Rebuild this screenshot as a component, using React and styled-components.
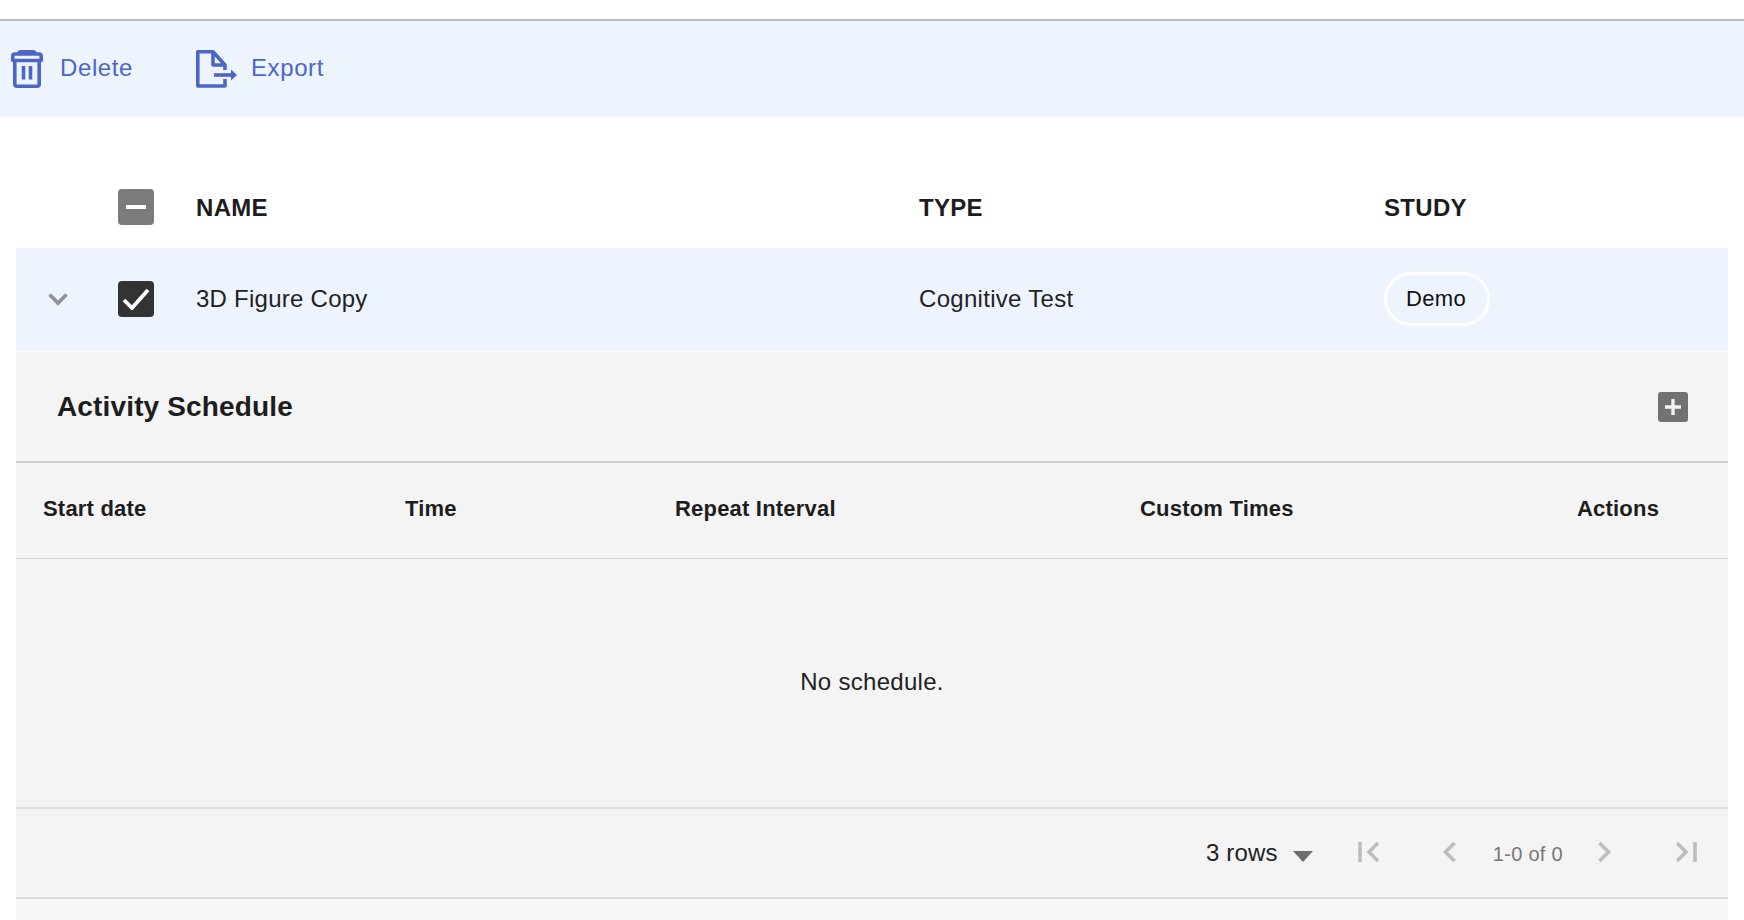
import React from "react";
import styled, { createGlobalStyle } from "styled-components";

const GlobalStyle = createGlobalStyle`
  html, body {
    margin: 0;
    padding: 0;
    background: #fff;
    font-family: "Liberation Sans", Arial, sans-serif;
    color: #1f1f1f;
  }
`;

const Page = styled.div`
  width: 1744px;
  height: 920px;
  overflow: hidden;
  padding-top: 19px;
  box-sizing: border-box;
`;

const Toolbar = styled.div`
  display: flex;
  align-items: center;
  height: 98px;
  box-sizing: border-box;
  border-top: 2px solid #bcbec2;
  background: #edf4fe;
  padding-left: 11px;
`;

const ToolButton = styled.div`
  display: flex;
  align-items: center;
  gap: ${(p) => p.$inner}px;
  margin-right: ${(p) => p.$gap || 0}px;
  color: #4c66c8;
  font-size: 24px;
  letter-spacing: 0.6px;
  line-height: 1;
  padding-bottom: 2px;
`;

const ToolIcon = styled.svg`
  display: block;
  margin-top: 2px;
`;

const Table = styled.div`
  margin: 0 16px;
`;

const MainRow = styled.div`
  display: grid;
  grid-template-columns: 102px 78px 723px 465px 1fr;
  align-items: center;
  box-sizing: border-box;
  height: ${(p) => p.$height}px;
  padding-bottom: 1px;
  background: ${(p) => p.$bg || "transparent"};
`;

const HeadRow = styled(MainRow)`
  padding-top: 49px;
  padding-bottom: 0;
  height: 131px;
`;

const HeadCell = styled.div`
  font-size: 24px;
  font-weight: 700;
  letter-spacing: 0.3px;
  color: #1d1d1d;
  padding-top: 2px;
`;

const BodyCell = styled.div`
  font-size: 24px;
  letter-spacing: ${(p) => p.$spacing}px;
  color: #222;
  padding-bottom: 1px;
`;

const Check = styled.div`
  width: 36px;
  height: 36px;
  border-radius: 4px;
  background: ${(p) => p.$bg};
  display: flex;
  align-items: center;
  justify-content: center;
`;

const ChevronCell = styled.div`
  display: flex;
  justify-content: center;
  padding-right: 18px;
`;

const Chip = styled.div`
  display: inline-flex;
  align-items: center;
  justify-content: center;
  width: 106px;
  height: 54px;
  box-sizing: border-box;
  border: 3px solid #fff;
  border-radius: 27px;
  padding-right: 2px;
  font-size: 22px;
  letter-spacing: 0.3px;
  color: #111;
`;

const Panel = styled.div`
  margin-top: 1px;
  background: #f4f4f4;
`;

const PanelHead = styled.div`
  display: flex;
  align-items: center;
  justify-content: space-between;
  height: 109px;
  padding: 0 40px 0 41px;
  border-bottom: 2px solid #cfcfcf;
`;

const PanelTitle = styled.div`
  font-size: 28px;
  font-weight: 700;
  letter-spacing: 0.15px;
  color: #1d1d1d;
`;

const AddButton = styled.div`
  width: 30px;
  height: 30px;
  border-radius: 3px;
  background: #727272;
  display: flex;
  align-items: center;
  justify-content: center;
`;

const ScheduleHead = styled.div`
  display: grid;
  grid-template-columns: 362px 270px 465px 437px 1fr;
  align-items: center;
  height: 95px;
  padding-left: 27px;
  border-bottom: 1px solid #d8d8d8;
`;

const ScheduleCell = styled.div`
  font-size: 22px;
  font-weight: 700;
  letter-spacing: 0.2px;
  color: #1d1d1d;
  padding-bottom: 4px;
`;

const Empty = styled.div`
  display: flex;
  align-items: center;
  justify-content: center;
  height: 250px;
  padding-bottom: 3px;
  box-sizing: border-box;
  font-size: 24px;
  letter-spacing: 0.3px;
  color: #222;
  border-bottom: 2px solid #dedede;
`;

const Pager = styled.div`
  display: flex;
  align-items: center;
  justify-content: flex-end;
  height: 88px;
  padding-right: 31px;
  border-bottom: 2px solid #dedede;
`;

const RowsSelect = styled.div`
  display: flex;
  align-items: center;
  gap: 15px;
  font-size: 24px;
  letter-spacing: 0.2px;
  color: #222;
  margin-right: 45px;
`;

const RowsCaret = styled.svg`
  display: block;
  margin-top: 6px;
`;

const PageCount = styled.div`
  font-size: 20px;
  letter-spacing: 0.3px;
  color: #777;
  margin: 2px 35px 0 37px;
`;

const PagerIcon = styled.svg`
  display: block;
  margin-right: ${(p) => p.$gap || 0}px;
  margin-top: -2px;
`;

const Rest = styled.div`
  height: 40px;
  background: #f8f8f8;
`;

function TrashIcon() {
  return (
    <ToolIcon width="32" height="38" viewBox="0 0 32 38" fill="none" stroke="#4c66c8" strokeWidth="3.600" strokeLinejoin="round">
      <path d="M1.800 10.500V6q0-2 2-2h24.400q2 0 2 2v4.500z" />
      <path d="M8 3.500q0-1.700 2-1.700h12q2 0 2 1.700" />
      <path d="M3.800 10.500V34q0 2.200 2.200 2.200h20q2.200 0 2.200-2.200V10.500" />
      <path d="M12.500 16v13.500M19.500 16v13.500" />
    </ToolIcon>
  );
}

function ExportIcon() {
  return (
    <ToolIcon width="41" height="38" viewBox="0 0 41 38" fill="none" stroke="#4c66c8" strokeWidth="3.600" strokeLinejoin="round">
      <path d="M29 29v7H1.800V1.800h15.200l12 13.200v5" />
      <path d="M17 1.800v13.200h12" />
      <path d="M18 25h18" />
      <path d="M35 19.500l6 5.500-6 5.500z" fill="#4c66c8" stroke="none" />
    </ToolIcon>
  );
}

function PagerArrow({ d, width, gap }) {
  return (
    <PagerIcon
      $gap={gap}
      width={width}
      height="22"
      viewBox={`0 0 ${width} 22`}
      fill="none"
      stroke="#bdbdbd"
      strokeWidth="3.600"
    >
      <path d={d} />
    </PagerIcon>
  );
}

export default function App() {
  return (
    <Page>
      <GlobalStyle />
      <Toolbar>
        <ToolButton $inner={17} $gap={63}>
          <TrashIcon />
          Delete
        </ToolButton>
        <ToolButton $inner={14}>
          <ExportIcon />
          Export
        </ToolButton>
      </Toolbar>
      <Table>
        <HeadRow>
          <div />
          <Check $bg="#7b7b7b">
            <svg width="20" height="4" viewBox="0 0 20 4">
              <rect width="20" height="4" fill="#fff" />
            </svg>
          </Check>
          <HeadCell>NAME</HeadCell>
          <HeadCell>TYPE</HeadCell>
          <HeadCell>STUDY</HeadCell>
        </HeadRow>
        <MainRow $height={103} $bg="#edf4fe">
          <ChevronCell>
            <svg width="20" height="13" viewBox="0 0 20 13" fill="none" stroke="#8f9399" strokeWidth="3.800">
              <path d="M1.500 1.500l8.500 8.500 8.500-8.500" />
            </svg>
          </ChevronCell>
          <Check $bg="#333">
            <svg width="28" height="22" viewBox="0 0 28 22" fill="none" stroke="#fff" strokeWidth="3.800">
              <path d="M2 12l8 8L26 2" />
            </svg>
          </Check>
          <BodyCell $spacing={0.25}>3D Figure Copy</BodyCell>
          <BodyCell $spacing={0.3}>Cognitive Test</BodyCell>
          <div>
            <Chip>Demo</Chip>
          </div>
        </MainRow>
        <Panel>
          <PanelHead>
            <PanelTitle>Activity Schedule</PanelTitle>
            <AddButton>
              <svg width="18" height="18" viewBox="0 0 18 18" stroke="#f3f3f3" strokeWidth="3.400">
                <path d="M9 1v16M1 9h16" />
              </svg>
            </AddButton>
          </PanelHead>
          <ScheduleHead>
            <ScheduleCell>Start date</ScheduleCell>
            <ScheduleCell>Time</ScheduleCell>
            <ScheduleCell>Repeat Interval</ScheduleCell>
            <ScheduleCell>Custom Times</ScheduleCell>
            <ScheduleCell>Actions</ScheduleCell>
          </ScheduleHead>
          <Empty>No schedule.</Empty>
          <Pager>
            <RowsSelect>
              3 rows
              <RowsCaret width="20" height="11" viewBox="0 0 20 11">
                <path d="M0 0h20L10 11z" fill="#6d6d6d" />
              </RowsCaret>
            </RowsSelect>
            <PagerArrow d="M2 1v20M20 2l-9 9 9 9" width={21} gap={63} />
            <PagerArrow d="M12.500 2l-9 9 9 9" width={14} />
            <PageCount>1-0 of 0</PageCount>
            <PagerArrow d="M1.500 2l9 9-9 9" width={14} gap={64} />
            <PagerArrow d="M1 2l9 9-9 9M19 1v20" width={21} />
          </Pager>
          <Rest />
        </Panel>
      </Table>
    </Page>
  );
}
